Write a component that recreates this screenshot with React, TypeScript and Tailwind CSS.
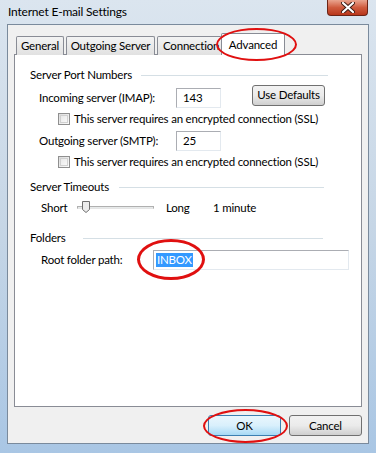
import React from "react";

const font = { fontFamily: 'Lato, "Noto Sans", Arial, sans-serif' };

function GroupHeader({ title, lineClass }: { title: string; lineClass: string }) {
  return (
    <div className="flex items-center h-[16px]">
      <span className="whitespace-nowrap">{title}</span>
      <div className={"h-px flex-1 bg-[#d5dfe5] " + lineClass} />
    </div>
  );
}

function Checkbox() {
  return (
    <div className="w-[12px] h-[12px] shrink-0 border border-[#8f8f8f] bg-gradient-to-br from-[#dcdcdc] to-[#fbfbfb] flex items-center justify-center">
      <div className="w-[8px] h-[8px] bg-gradient-to-br from-[#e8e8e8] to-[#f8f8f8] border border-[#d0d0d0]" />
    </div>
  );
}

function TextBox({ w, value }: { w: string; value: string }) {
  return (
    <div className={"h-[20px] border border-[#abadb3] border-r-[#e3e9ef] border-b-[#e3e9ef] bg-white flex items-center pl-[6px] " + w}>
      {value}
    </div>
  );
}

const tabBase =
  "h-[19px] mb-[-1px] border border-[#898c95] border-b-0 rounded-t-[2px] bg-gradient-to-b from-[#f3f3f3] to-[#e1e1e1] flex items-center justify-center whitespace-nowrap overflow-hidden";

export default function App() {
  return (
    <div
      className="w-[376px] h-[453px] relative overflow-hidden text-[11.5px] tracking-[-0.2px] leading-[14px] text-black bg-gradient-to-b from-[#dbe5ef] via-[#c6d6e6] to-[#a9c6e4]"
      style={font}
    >
      {/* Title bar */}
      <div className="h-[24px] flex items-center pl-[8px] relative">
        <span className="text-[12px] whitespace-nowrap text-black">Internet E-mail Settings</span>
        <div className="absolute right-[8px] top-0 w-[41px] h-[16px] rounded-b-[4px] border border-[#6b2416] border-t-0 bg-gradient-to-b from-[#e9a48f] via-[#cf5b3e] to-[#b8361a] flex items-center justify-center">
          <svg width="14" height="11" viewBox="0 0 14 11">
            <path d="M2 1 L12 10 M12 1 L2 10" stroke="#3a1a12" strokeWidth="4" strokeLinecap="round" />
            <path d="M2 1 L12 10 M12 1 L2 10" stroke="#ffffff" strokeWidth="2.2" strokeLinecap="round" />
          </svg>
        </div>
      </div>

      {/* Client area */}
      <div className="ml-[7px] w-[362px] h-[420px] border border-[#7a8a9c] bg-[#f0f0f0] flex flex-col">
        {/* Tabs */}
        <div className="flex items-end h-[29px] pl-[8px] relative z-10">
          <div className={tabBase + " w-[48px]"}>General</div>
          <div className={tabBase + " ml-[2px] w-[89px]"}>Outgoing Server</div>
          <div className={tabBase + " ml-[2px] w-[65px] justify-start pl-[5px]"}>Connection</div>
          <div className="h-[22px] mb-[-1px] ml-[-1px] border border-[#898c95] border-b-0 rounded-t-[2px] bg-white flex items-center justify-center w-[64px] whitespace-nowrap">Advanced</div>
        </div>

        {/* Panel */}
        <div className="ml-[6px] w-[348px] h-[353px] border border-[#898c95] bg-white flex flex-col pl-[15px]">
          <div className="mt-[12px]">
            <GroupHeader title="Server Port Numbers" lineClass="ml-[9px] mr-[33px]" />
          </div>
          <div className="flex items-center mt-[5px] ml-[9px] h-[20px]">
            <span className="w-[137px] whitespace-nowrap">Incoming server (IMAP):</span>
            <TextBox w="w-[45px]" value="143" />
            <button className="ml-[31px] mt-[-6px] w-[73px] h-[21px] rounded-[3px] border border-[#707070] bg-gradient-to-b from-[#f2f2f2] via-[#ebebeb] to-[#cfcfcf] flex items-center justify-center whitespace-nowrap">Use Defaults</button>
          </div>
          <div className="flex items-center mt-[5px] ml-[28px] h-[12px]">
            <Checkbox />
            <span className="ml-[4px] whitespace-nowrap">This server requires an encrypted connection (SSL)</span>
          </div>
          <div className="flex items-center mt-[6px] ml-[9px] h-[20px]">
            <span className="w-[137px] whitespace-nowrap">Outgoing server (SMTP):</span>
            <TextBox w="w-[45px]" value="25" />
          </div>
          <div className="flex items-center mt-[5px] ml-[28px] h-[12px]">
            <Checkbox />
            <span className="ml-[4px] whitespace-nowrap">This server requires an encrypted connection (SSL)</span>
          </div>

          <div className="mt-[11px]">
            <GroupHeader title="Server Timeouts" lineClass="ml-[10px] mr-[37px]" />
          </div>
          <div className="flex items-center mt-[6px] ml-[11px] h-[14px]">
            <span className="w-[36px]">Short</span>
            <div className="relative w-[77px] h-[14px]">
              <div className="absolute left-0 right-0 top-[5px] h-[3px] border border-[#b0b0b0] border-b-[#e5e5e5] bg-[#e7eaea]" />
              <svg className="absolute left-[5px] top-[0px]" width="8" height="12" viewBox="0 0 8 12">
                <path d="M0.5 0.5 H7.5 V8.5 L4 11.5 L0.5 8.5 Z" fill="#ececec" stroke="#6f6f6f" />
              </svg>
            </div>
            <span className="ml-[12px] w-[47px]">Long</span>
            <span className="whitespace-nowrap">1 minute</span>
          </div>

          <div className="mt-[15px]">
            <GroupHeader title="Folders" lineClass="ml-[18px] mr-[38px]" />
          </div>
          <div className="flex items-center mt-[4px] ml-[11px] h-[20px]">
            <span className="w-[112px] whitespace-nowrap">Root folder path:</span>
            <div className="w-[196px] h-[20px] border border-[#abadb3] border-r-[#e3e9ef] border-b-[#e3e9ef] bg-white flex items-center pl-[2px]">
              <span className="bg-[#3399ff] text-white px-[1px] leading-[14px]">INBOX</span>
            </div>
          </div>
        </div>

        {/* Buttons */}
        <div className="flex justify-end pr-[6px] mt-[8px] gap-[8px]">
          <button className="w-[73px] h-[21px] rounded-[3px] border border-[#3c7fb1] bg-gradient-to-b from-[#eaf6fd] via-[#d9f0fc] to-[#a7d9f5] flex items-center justify-center">OK</button>
          <button className="w-[73px] h-[21px] rounded-[3px] border border-[#707070] bg-gradient-to-b from-[#f2f2f2] via-[#ebebeb] to-[#cfcfcf] flex items-center justify-center">Cancel</button>
        </div>
      </div>

      {/* Red annotation ellipses */}
      <div className="absolute left-[216px] top-[28px] w-[81px] h-[33px] rounded-[50%] border-[2px] border-[#e01010] z-20" />
      <div className="absolute left-[137px] top-[239px] w-[68px] h-[41px] rounded-[50%] border-[3px] border-[#e01010] z-20" />
      <div className="absolute left-[203px] top-[409px] w-[85px] h-[34px] rounded-[50%] border-[2px] border-[#e01010] z-20" />
    </div>
  );
}
